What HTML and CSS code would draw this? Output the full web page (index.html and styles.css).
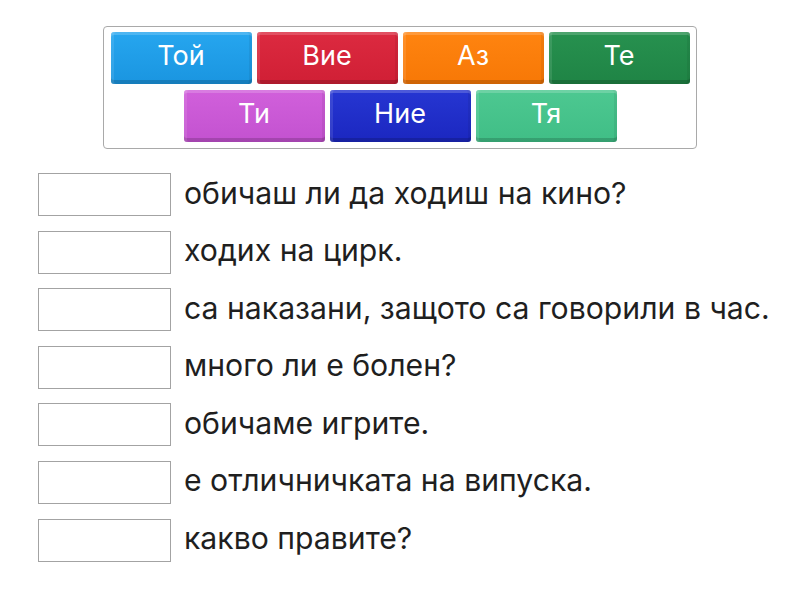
FILE: index.html
```html
<!DOCTYPE html>
<html lang="bg">
<head>
<meta charset="utf-8">
<link rel="stylesheet" href="styles.css">
</head>
<body>
<div class="page">
  <div class="bank">
    <div class="tile t-blue">Той</div>
    <div class="tile t-red">Вие</div>
    <div class="tile t-orange">Аз</div>
    <div class="tile t-green">Те</div>
    <div class="tile t-purple">Ти</div>
    <div class="tile t-navy">Ние</div>
    <div class="tile t-mint">Тя</div>
  </div>
  <div class="rows">
    <div class="row"><div class="slot"></div><div class="text">обичаш ли да ходиш на кино?</div></div>
    <div class="row"><div class="slot"></div><div class="text">ходих на цирк.</div></div>
    <div class="row"><div class="slot"></div><div class="text">са наказани, защото са говорили в час.</div></div>
    <div class="row"><div class="slot"></div><div class="text">много ли е болен?</div></div>
    <div class="row"><div class="slot"></div><div class="text">обичаме игрите.</div></div>
    <div class="row"><div class="slot"></div><div class="text">е отличничката на випуска.</div></div>
    <div class="row"><div class="slot"></div><div class="text">какво правите?</div></div>
  </div>
</div>
</body>
</html>
```
FILE: styles.css
```css
html, body {
  margin: 0;
  padding: 0;
  background: #fff;
}
body {
  font-family: Inter, "Noto Sans", sans-serif;
  color: #1f1f1f;
}
.page {
  padding-top: 26px;
}
.bank {
  box-sizing: border-box;
  width: 594px;
  margin-left: 103px;
  padding: 5px 6px 6px 6px;
  border: 1px solid #a9a9a9;
  border-radius: 4px;
  display: flex;
  flex-wrap: wrap;
  justify-content: center;
  gap: 6px 5px;
}
.tile {
  box-sizing: border-box;
  width: 141px;
  height: 52px;
  border-radius: 3px;
  color: #fff;
  font-size: 27px;
  display: flex;
  align-items: center;
  justify-content: center;
  padding-bottom: 5px;
  box-shadow: inset 0 3px 0 rgba(255,255,255,0.18), inset 3px 0 0 rgba(255,255,255,0.1), inset -3px 0 0 rgba(0,0,0,0.06), inset 0 -4px 0 rgba(0,0,0,0.16);
}
.t-blue { background: linear-gradient(#26a6ef, #1a95e0); }
.t-red { background: linear-gradient(#dc2a40, #d01f35); }
.t-orange { background: linear-gradient(#ff8410, #f77806); }
.t-green { background: linear-gradient(#27914f, #1f8445); }
.t-purple { background: linear-gradient(#d160db, #c352d0); }
.t-navy { background: linear-gradient(#2636d2, #1b27c0); }
.t-mint { background: linear-gradient(#4dc891, #40be86); }
.rows {
  margin-top: 24px;
  margin-left: 38px;
  display: flex;
  flex-direction: column;
  gap: 14.6px;
}
.row {
  display: flex;
  align-items: center;
  height: 43px;
}
.slot {
  box-sizing: border-box;
  width: 133px;
  height: 43px;
  border: 1px solid #a3a3a3;
  flex: none;
}
.text {
  margin-left: 13px;
  font-size: 30.2px;
  white-space: nowrap;
  padding-bottom: 4px;
}
```
